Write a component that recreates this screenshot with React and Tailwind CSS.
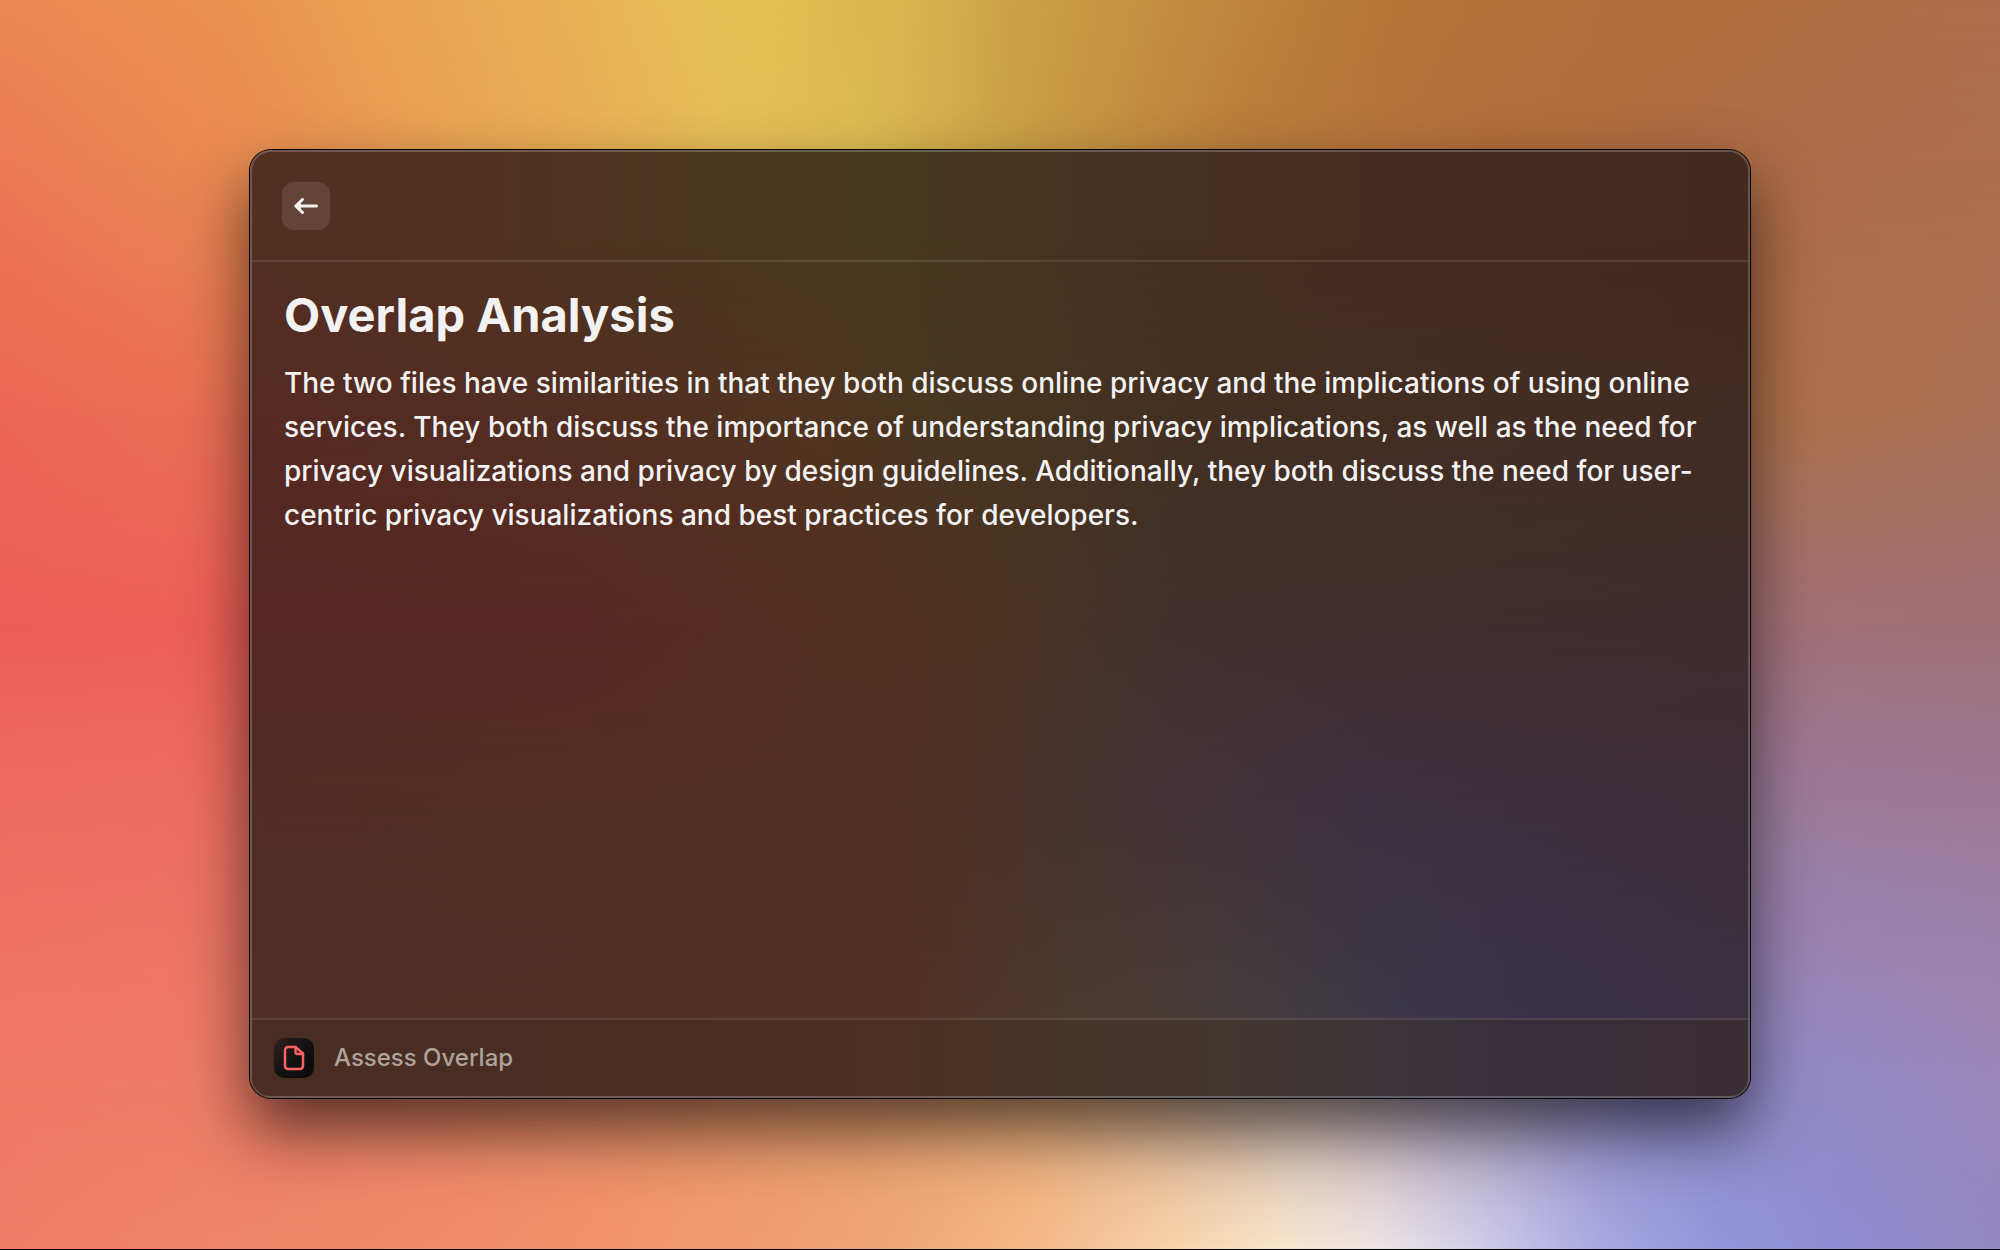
const wallpaper = [
  'bg-[linear-gradient(90deg,#eb8853_0%,#ea9451_12%,#ebab55_25%,#e8bb57_33%,#e3c053_38%,#d9b64f_45%,#cda047_51%,#c28c41_59%,#b67636_69%,#b06d39_82%,#ad6d49_100%)]',
  'bg-[linear-gradient(90deg,#eb7a52_0%,#e98a51_11%,#e9a655_25%,#e6bc57_36%,#dcbc53_43%,#c99a45_52%,#b97c3a_62%,#b06c3a_75%,#ad6b45_86%,#ac6d4c_100%)] [mask-image:linear-gradient(transparent_0%,black_13%)]',
  'bg-[linear-gradient(90deg,#ec6654_0%,#e97054_12%,#d8a050_45%,#b07440_70%,#ad7048_88%,#a96e54_100%)] [mask-image:linear-gradient(transparent_13%,black_33%)]',
  'bg-[linear-gradient(90deg,#ec5f56_0%,#ed6056_12%,#c08050_50%,#a27078_88%,#9f7077_100%)] [mask-image:linear-gradient(transparent_33%,black_50%)]',
  'bg-[linear-gradient(90deg,#ee6f60_0%,#ec7262_12%,#d09070_50%,#9a7fa6_88%,#9c7da0_100%)] [mask-image:linear-gradient(transparent_50%,black_69%)]',
  'bg-[linear-gradient(90deg,#ef7a64_0%,#ed7d66_14%,#eb9568_35%,#e8ac78_52%,#c8b4b0_66%,#8f8ac8_82%,#938ac6_92%,#9a88bb_100%)] [mask-image:linear-gradient(transparent_69%,black_87%)]',
  'bg-[linear-gradient(90deg,#ee7d66_0%,#ee8768_15%,#f0926c_30%,#f0a373_43%,#f4b585_51%,#f8d4ac_59%,#f8e5cb_64%,#ece4e4_69%,#d0cde9_74%,#a9a8e2_80%,#9395da_86%,#908bd2_92%,#9388c2_100%)] [mask-image:linear-gradient(transparent_87%,black_100%)]',
];

const glass = [
  'bg-[linear-gradient(90deg,#532e22_0%,#503221_16%,#4b3620_30%,#493920_42%,#453120_56%,#452c20_75%,#44291f_100%)]',
  'bg-[linear-gradient(90deg,#552a23_0%,#522e22_20%,#503420_38%,#483721_46%,#433021_62%,#422c23_100%)] [mask-image:linear-gradient(transparent_10%,black_28%)]',
  'bg-[linear-gradient(90deg,#562723_0%,#572824_22%,#522e20_40%,#4b3322_50%,#402f2d_62%,#3f2c2f_100%)] [mask-image:linear-gradient(transparent_28%,black_50%)]',
  'bg-[linear-gradient(90deg,#522b24_0%,#522d23_35%,#4d3226_48%,#423336_60%,#3b303d_74%,#3c2e37_100%)] [mask-image:linear-gradient(transparent_50%,black_68%)]',
  'bg-[linear-gradient(90deg,#502e26_0%,#513126_44%,#4c392d_54%,#453d3c_65%,#3b3747_77%,#383148_85%,#3a303f_100%)] [mask-image:linear-gradient(transparent_68%,black_91%)]',
];

function Layers({ items }) {
  return items.map((c) => <div key={c} aria-hidden="true" className={`[grid-area:1/1] ${c}`} />);
}

export default function App() {
  return (
    <div className="grid min-h-screen border-b border-black bg-black font-['Inter',sans-serif]">
      <Layers items={wallpaper} />
      <div className="z-10 flex flex-col px-[12.5%] pt-[150px] pb-[151px] [grid-area:1/1]">
        <main className="grid flex-1 overflow-hidden rounded-[21px] shadow-[0_0_0_1px_#000,0_32px_64px_rgba(0,0,0,0.62)]">
          <Layers items={glass} />
          <div className="z-10 flex flex-col rounded-[21px] border-2 border-white/20 [grid-area:1/1]">
            <header className="flex h-[110px] items-center border-b-2 border-white/10 px-[30px]">
              <button type="button" aria-label="Back" className="flex size-12 items-center justify-center rounded-xl bg-white/10">
                <svg width="24" height="16" viewBox="0 0 24 16" fill="none" stroke="#f3f2f2" strokeWidth="3" strokeLinecap="round" strokeLinejoin="round" aria-hidden="true">
                  <path d="M22.500 8H2M8.500 1.500L1.800 8L8.500 14.500" />
                  <path d="M3 8L7 4.500V11.500Z" fill="#f3f2f2" stroke="none" />
                </svg>
              </button>
            </header>
            <article className="flex-1 px-8 pt-6 text-[#f3f2f2]">
              <h1 className="text-[47px] leading-[58px] font-bold">Overlap Analysis</h1>
              <p className="mt-[17px] text-[28px] leading-[44px] font-medium">
                The two files have similarities in that they both discuss online privacy and the implications of using online services. They both discuss the importance of understanding privacy implications, as well as the need for privacy visualizations and privacy by design guidelines. Additionally, they both discuss the need for user-centric privacy visualizations and best practices for developers.
              </p>
            </article>
            <footer className="flex h-[78px] items-center gap-5 border-t-2 border-white/10 bg-[#3a2a1c]/30 px-[22px]">
              <span className="flex size-10 items-center justify-center rounded-[10px] bg-linear-to-br from-[#33201f] via-[#141212] to-[#090a0a]">
                <svg width="22" height="26" viewBox="0 0 22 26" fill="none" stroke="#ff6363" strokeWidth="2.500" strokeLinecap="round" strokeLinejoin="round" aria-hidden="true">
                  <path d="M12.500 2H5A3 3 0 0 0 2 5V21A3 3 0 0 0 5 24H17A3 3 0 0 0 20 21V8.500Z" />
                  <path d="M12.500 2V7A2 2 0 0 0 14.500 9H20" />
                </svg>
              </span>
              <span className="text-2xl font-medium text-[#afa29c]">Assess Overlap</span>
            </footer>
          </div>
        </main>
      </div>
    </div>
  );
}
